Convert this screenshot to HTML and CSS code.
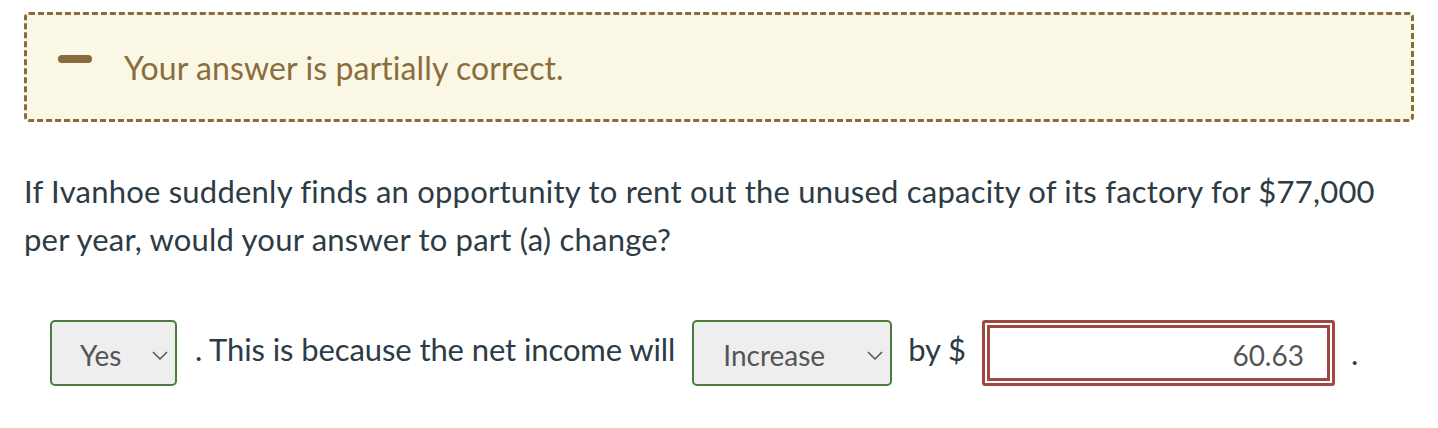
FILE: index.html
```html
<!DOCTYPE html>
<html lang="en">
<head>
<meta charset="utf-8">
<link rel="stylesheet" href="styles.css">
</head>
<body>
<div class="page">
  <div class="banner">
    <span class="banner-icon"></span>
    <span class="banner-text">Your answer is partially correct.</span>
  </div>
  <p class="question">If Ivanhoe suddenly finds an opportunity to rent out the unused capacity of its factory for $77,000 per year, would your answer to part (a) change?</p>
  <div class="answer-row">
    <div class="select select-yes">
      <span class="select-value">Yes</span>
      <svg class="chevron" width="16" height="9" viewBox="0 0 16 9"><path d="M1 1 L8 8 L15 1" fill="none" stroke="#555" stroke-width="1.5"/></svg>
    </div>
    <span class="row-text row-text-first">. This is because the net income will</span>
    <div class="select select-inc">
      <span class="select-value">Increase</span>
      <svg class="chevron" width="16" height="9" viewBox="0 0 16 9"><path d="M1 1 L8 8 L15 1" fill="none" stroke="#555" stroke-width="1.5"/></svg>
    </div>
    <span class="row-text row-text-by">by $</span>
    <div class="input-box"><span class="input-value">60.63</span></div>
    <span class="row-dot">.</span>
  </div>
</div>
</body>
</html>
```
FILE: styles.css
```css
html, body {
  margin: 0;
  padding: 0;
  background: #ffffff;
}
body {
  font-family: Lato, "Open Sans", sans-serif;
  color: #2d3b45;
}
.page {
  padding: 12px 24px 0 24px;
}
.banner {
  box-sizing: border-box;
  height: 110px;
  border: 3px dashed #876b3e;
  border-radius: 5px;
  background: #fbf7e5;
  display: flex;
  align-items: center;
  padding-left: 31px;
  gap: 32px;
}
.banner-icon {
  display: block;
  width: 34px;
  height: 8px;
  border-radius: 4px;
  background: #876b3e;
  margin-top: -17px;
}
.banner-text {
  font-size: 32px;
  color: #8a6d3e;
  margin-top: 0;
  letter-spacing: 0.1px;
}
.question {
  margin: 45px 0 0 0;
  font-size: 31px;
  letter-spacing: 0.22px;
  line-height: 48px;
}
.answer-row {
  display: flex;
  align-items: center;
  margin-top: 57px;
  padding-left: 26px;
  font-size: 31px;
}
.answer-row > * {
  flex-shrink: 0;
}
.select {
  box-sizing: border-box;
  height: 66px;
  border: 2px solid #4d7a40;
  border-radius: 5px;
  background: #eeeeee;
  display: flex;
  align-items: center;
  justify-content: space-between;
  color: #555555;
  font-size: 28px;
}
.select-yes {
  width: 127px;
  padding: 4px 7px 0 28px;
}
.select-inc {
  width: 200px;
  padding: 4px 7px 0 29px;
  margin-left: 17px;
}
.chevron {
  display: block;
}
.row-text {
  margin-top: -8px;
  letter-spacing: -0.1px;
}
.row-text-first {
  margin-left: 18px;
}
.row-text-by {
  margin-left: 16px;
}
.input-box {
  box-sizing: border-box;
  width: 353px;
  height: 66px;
  margin-left: 16px;
  border: 3px solid #a0473f;
  border-radius: 3px;
  box-shadow: inset 0 0 0 2px #ffffff, inset 0 0 0 5px #a0473f;
  background: #ffffff;
  display: flex;
  align-items: center;
  justify-content: flex-end;
  padding: 4px 28px 0 0;
  color: #555555;
  font-size: 28px;
}
.row-dot {
  margin-left: 16px;
  font-size: 31px;
}
```
